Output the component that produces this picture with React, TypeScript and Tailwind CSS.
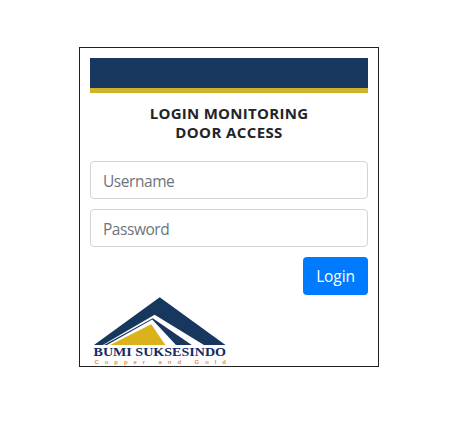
function Logo() {
  return (
    <svg className="block h-[70px] w-[136px]" viewBox="0 0 136 70" role="img" aria-label="Bumi Suksesindo">
      <path d="M67.7 1.2 133.5 49H112L62.6 18.8 10.8 49H2Z" fill="#17375e" />
      <path d="M12 49 60.7 22.2 99.8 49H84L60.2 23.6 15 49Z" fill="#17375e" />
      <path d="M18 49 59.2 28.3 73.4 49Z" fill="#dbb11c" />
      <text
        x="1.5"
        y="60.3"
        fontSize="13.5"
        fontWeight="700"
        textLength="132.5"
        lengthAdjust="spacingAndGlyphs"
        fill="#152a63"
        className="font-['Liberation_Serif',serif]"
      >
        BUMI SUKSESINDO
      </text>
      <text
        x="2.5"
        y="67.8"
        fontSize="6"
        fontWeight="700"
        textLength="131.5"
        fill="#e58a4c"
        className="font-['Liberation_Sans',sans-serif]"
      >
        Copper and Gold
      </text>
    </svg>
  );
}

const field =
  "block h-[38px] w-full rounded border border-[#ced4da] bg-white px-3 pt-px text-[15.5px] tracking-[-0.45px] text-[#495057] placeholder:text-[#6c757d] outline-none";

export default function App() {
  return (
    <main className="h-[430px] w-[450px] bg-white pt-[47px] pl-[79px] font-['Open_Sans','Noto_Sans',sans-serif] text-[#212529]">
      <form className="flex h-[320px] w-[300px] flex-col border border-[#212121] px-2.5 pt-2.5">
        <div className="h-[35px] shrink-0 border-b-[5px] border-[#cdb428] bg-[#17375e]" />
        <h1 className="mt-[11px] text-center text-[15px] leading-[19px] font-bold">
          <span className="block tracking-[0.28px]">LOGIN MONITORING</span>
          <span className="block tracking-[0.4px]">DOOR ACCESS</span>
        </h1>
        <div className="mt-[19px] flex flex-col gap-2.5">
          <input className={field} placeholder="Username" />
          <input className={field} type="password" placeholder="Password" />
          <button type="button" className="h-[38px] w-[65px] self-end rounded bg-[#007bff] pt-0.5 text-[15.5px] tracking-[-0.1px] text-white">
            Login
          </button>
        </div>
        <div className="mt-px ml-[2px]">
          <Logo />
        </div>
      </form>
    </main>
  );
}
